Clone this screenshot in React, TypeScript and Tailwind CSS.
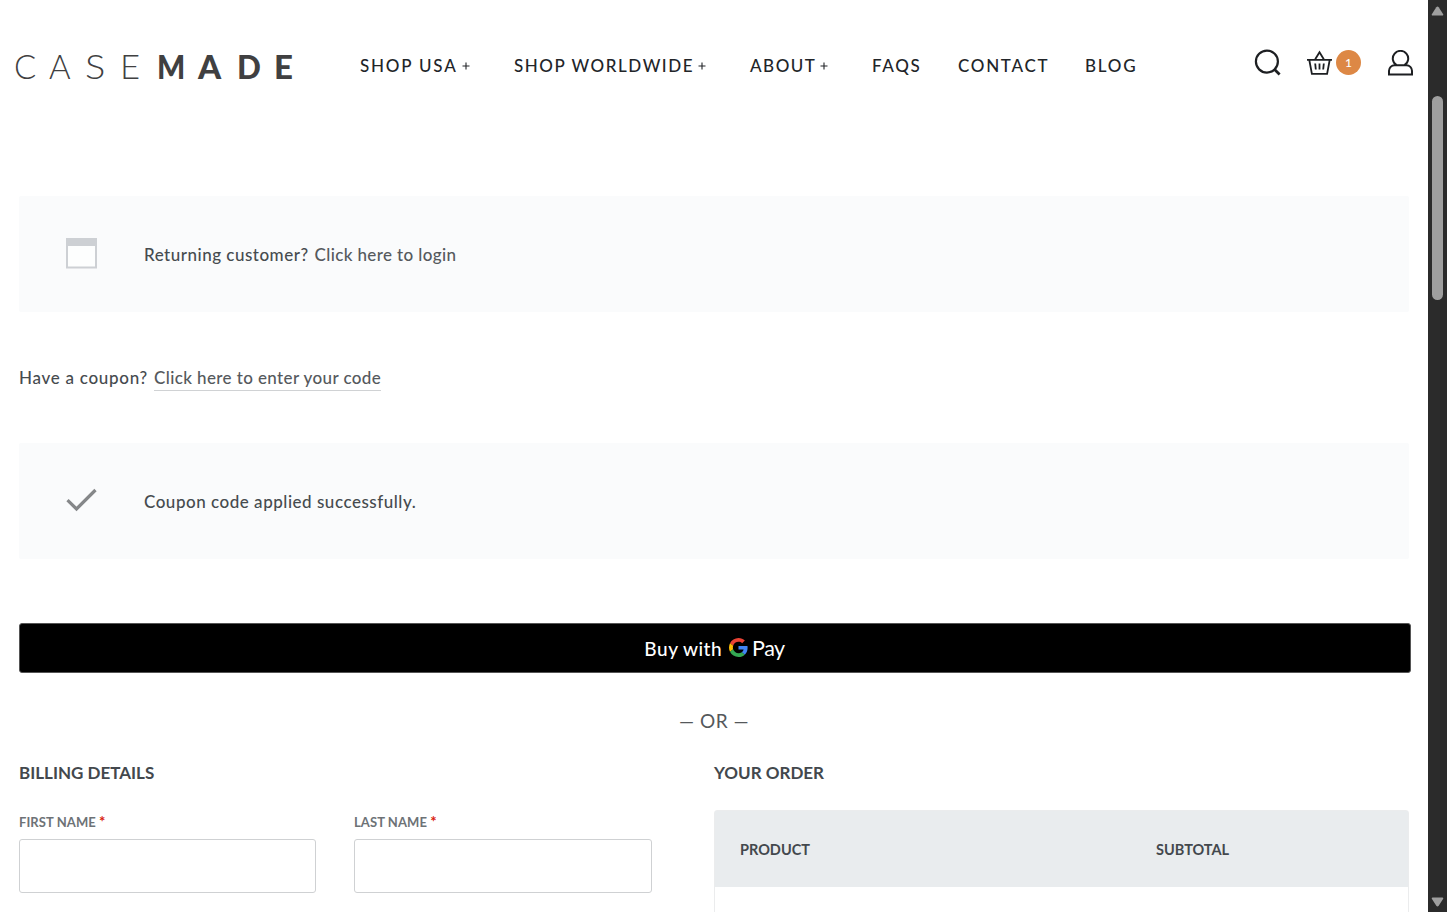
import React from "react";

const logoLetters = [
  { char: "C", className: "w-[35px] font-light" },
  { char: "A", className: "w-[36px] font-light" },
  { char: "S", className: "w-[35px] origin-left scale-x-115 font-light" },
  { char: "E", className: "w-[37px] origin-left scale-x-105 font-light" },
  { char: "M", className: "w-[41px] origin-left scale-x-90 font-black" },
  { char: "A", className: "w-[39px] font-black" },
  { char: "D", className: "w-[37px] origin-left scale-x-95 font-black" },
  { char: "E", className: "w-[22px] font-black" },
];

const navItems = [
  { label: "SHOP USA", hasMenu: true, className: "w-[154px] tracking-[1.8px]" },
  { label: "SHOP WORLDWIDE", hasMenu: true, className: "w-[236px] tracking-[1.55px]" },
  { label: "ABOUT", hasMenu: true, className: "w-[122px] tracking-[1.5px]" },
  { label: "FAQS", hasMenu: false, className: "w-[86px] tracking-[1.7px]" },
  { label: "CONTACT", hasMenu: false, className: "w-[127px] tracking-[1.7px]" },
  { label: "BLOG", hasMenu: false, className: "w-[60px] tracking-[1.8px]" },
];

function Logo() {
  return (
    <a className="flex w-[346px] pl-[14px] text-[33px] leading-[40px] text-[#404041]">
      {logoLetters.map((letter, i) => (
        <span key={i} className={letter.className}>
          {letter.char}
        </span>
      ))}
    </a>
  );
}

function Header() {
  return (
    <header className="flex h-[132px] items-center">
      <Logo />
      <nav className="flex flex-1 pl-[14px] text-[17px] leading-6 font-medium text-[#222529]">
        {navItems.map((item) => (
          <a
            key={item.label}
            className={`flex items-center whitespace-nowrap ${item.className}`}>
            <span>{item.label}</span>
            {item.hasMenu && (
              <svg className="ml-[4px] size-2" viewBox="0 0 8 8" stroke="currentColor" strokeWidth="1.1">
                <path d="M4 0.5v7M0.5 4h7" />
              </svg>
            )}
          </a>
        ))}
      </nav>
      <div className="flex items-center pr-[14px] pb-[7px] text-[#1d1f22]">
        <svg className="h-[27px] w-[27px]" viewBox="0 0 27 27" fill="none" stroke="currentColor" strokeWidth="2.2">
          <circle cx="12.9" cy="12.6" r="11" />
          <path d="M20.6 20.4l5 5" strokeWidth="2.8" />
        </svg>
        <svg className="ml-[26px] h-[26px] w-[25px]" viewBox="0 0 25 26" fill="none" stroke="currentColor" strokeWidth="1.8">
          <path d="M0 9.8h25M2.3 10l2.6 13.8h15.2L22.7 10M8.2 9.3l4.3-7 4.3 7" />
          <path d="M8.2 13.5l.6 6M12.5 13.5v6M16.8 13.5l-.6 6" />
        </svg>
        <span className="ml-1 flex size-[25px] items-center justify-center rounded-full bg-[#dd8845] text-[12px] font-medium text-white">
          1
        </span>
        <svg className="ml-[27px] h-[26px] w-[26px]" viewBox="0.5 0 26 26" fill="none" stroke="currentColor" strokeWidth="2">
          <path d="M9.1 15.2a7.7 7.7 0 1 1 7.8 0" />
          <path d="M1.5 24.6v-3.8a5.6 5.6 0 0 1 5.6-5.6h11.8a5.6 5.6 0 0 1 5.6 5.6v3.8z" />
        </svg>
      </div>
    </header>
  );
}

function Notice({ icon, children }: { icon: React.ReactNode; children: React.ReactNode }) {
  return (
    <div className="mr-[19px] ml-[19px] flex h-[116px] items-center rounded-xs bg-[#fafbfc]">
      <div className="flex w-[125px] justify-center pb-[2px]">{icon}</div>
      <p className="pt-[2px] text-[17px] leading-6 font-medium text-[#464b4f]">{children}</p>
    </div>
  );
}

function GooglePayButton() {
  return (
    <button className="mx-[19px] mt-[64px] flex h-[50px] w-[1392px] items-center justify-center rounded-[3px] border border-[#555] bg-black pr-px text-white">
      <span className="pt-[2px] text-[19px] font-medium tracking-[0.5px]">Buy with</span>
      <svg className="mb-px ml-[7px] size-[19px]" viewBox="0 0 48 48">
        <path fill="#EA4335" d="M24 9.5c3.54 0 6.71 1.22 9.21 3.6l6.85-6.85C35.9 2.38 30.47 0 24 0 14.62 0 6.51 5.38 2.56 13.22l7.98 6.19C12.43 13.72 17.74 9.5 24 9.5z" />
        <path fill="#4285F4" d="M46.98 24.55c0-1.57-.15-3.09-.38-4.55H24v9.02h12.94c-.58 2.96-2.26 5.48-4.78 7.18l7.73 6c4.51-4.18 7.09-10.36 7.09-17.65z" />
        <path fill="#FBBC05" d="M10.53 28.59A14.5 14.5 0 0 1 9.77 24c0-1.6.27-3.14.76-4.59l-7.98-6.19A23.9 23.9 0 0 0 0 24c0 3.88.92 7.54 2.56 10.78z" />
        <path fill="#34A853" d="M24 48c6.48 0 11.93-2.13 15.89-5.81l-7.73-6c-2.15 1.45-4.92 2.3-8.16 2.3-6.26 0-11.57-4.22-13.47-9.91l-7.98 6.19C6.51 42.62 14.62 48 24 48z" />
      </svg>
      <span className="ml-[4px] text-[21.5px] tracking-[-0.5px]">Pay</span>
    </button>
  );
}

function Field({ label }: { label: string }) {
  return (
    <label className="block">
      <span className="block h-5 text-[13px] leading-5 font-bold text-[#6d7276]">
        <span className="tracking-[0.08px]">{label}</span>{" "}
        <span className="text-[15px] leading-none text-[#d8200d]">*</span>
      </span>
      <input className="mt-[7px] block h-[54px] w-full rounded-[3px] border border-[#cfd1d3] bg-white px-4 outline-none" />
    </label>
  );
}

function Scrollbar() {
  return (
    <aside className="flex w-[19px] flex-col items-center bg-[#2b2b2b]">
      <svg className="mt-[6px] h-[10px] w-[13px]" viewBox="0 0 13 10" fill="#9f9f9f">
        <path d="M5.3 1.2L.8 8.2Q.4 9.6 1.8 9.6h9.4q1.4 0 1-1.4L7.7 1.2Q6.5-.2 5.3 1.2z" />
      </svg>
      <div className="mt-[80px] h-[204px] w-[11px] rounded-full bg-[#9f9f9f]" />
      <svg className="mt-auto mb-[5px] h-[10px] w-[13px]" viewBox="0 0 13 10" fill="#9f9f9f">
        <path d="M5.3 8.8L.8 1.8Q.4.4 1.8.4h9.4q1.4 0 1 1.4L7.7 8.8q-1.2 1.4-2.4 0z" />
      </svg>
    </aside>
  );
}

export default function App() {
  return (
    <div className="flex h-[912px] w-[1447px] overflow-hidden bg-white font-['Lato',sans-serif]">
      <main className="h-full w-[1428px]">
        <Header />

        <div className="pt-[64px]">
          <Notice
            icon={
              <svg className="mr-px h-[31px] w-[31px]" viewBox="0 0 31 31">
                <rect x="1" y="1" width="29" height="28.5" fill="#fdfefe" stroke="#cdd0d4" strokeWidth="2" />
                <path d="M0 0h31v8H0z" fill="#cdd0d4" />
              </svg>
            }>
            <span className="tracking-[0.5px]">Returning customer?</span>
            <a className="ml-[6px] tracking-[0.37px] text-[#55595d]">Click here to login</a>
          </Notice>
        </div>

        <p className="mt-[54px] ml-[19px] text-[17px] leading-6 font-medium text-[#464b4f]">
          <span className="tracking-[0.72px]">Have a coupon?</span>
          <a className="ml-[6px] border-b border-[#d0d2d4] pb-[2px] tracking-[0.39px] text-[#55595d]">
            Click here to enter your code
          </a>
        </p>

        <div className="pt-[53px]">
          <Notice
            icon={
              <svg className="mr-px h-[24px] w-[31px]" viewBox="0 0 31 24" fill="none" stroke="#858789" strokeWidth="3.2">
                <path d="M1.5 12.2l9 8.8L29.5 2" />
              </svg>
            }>
            <span className="tracking-[0.52px]">Coupon code applied successfully.</span>
          </Notice>
        </div>

        <GooglePayButton />

        <p className="mt-[34px] text-center text-[19px] leading-7 tracking-[0.5px] text-[#55585b]">— OR —</p>

        <div className="mx-[19px] mt-[26px] flex">
          <section className="w-[633px]">
            <h3 className="text-[17px] leading-6 font-bold text-[#43484d]">BILLING DETAILS</h3>
            <div className="mt-[27px] grid grid-cols-[297px_298px] gap-x-[38px]">
              <Field label="FIRST NAME" />
              <Field label="LAST NAME" />
            </div>
          </section>
          <section className="ml-[62px] w-[695px]">
            <h3 className="text-[17px] leading-6 font-bold text-[#43484d]">YOUR ORDER</h3>
            <div className="mt-[25px] h-[120px] rounded-t-[3px] border border-[#ebeced]">
              <div className="flex h-[76px] items-center bg-[#e9ecee] pt-[2px] text-[14.5px] font-bold text-[#43484d]">
                <span className="w-[416px] pl-[25px]">PRODUCT</span>
                <span className="pl-[25px]">SUBTOTAL</span>
              </div>
            </div>
          </section>
        </div>
      </main>
      <Scrollbar />
    </div>
  );
}
